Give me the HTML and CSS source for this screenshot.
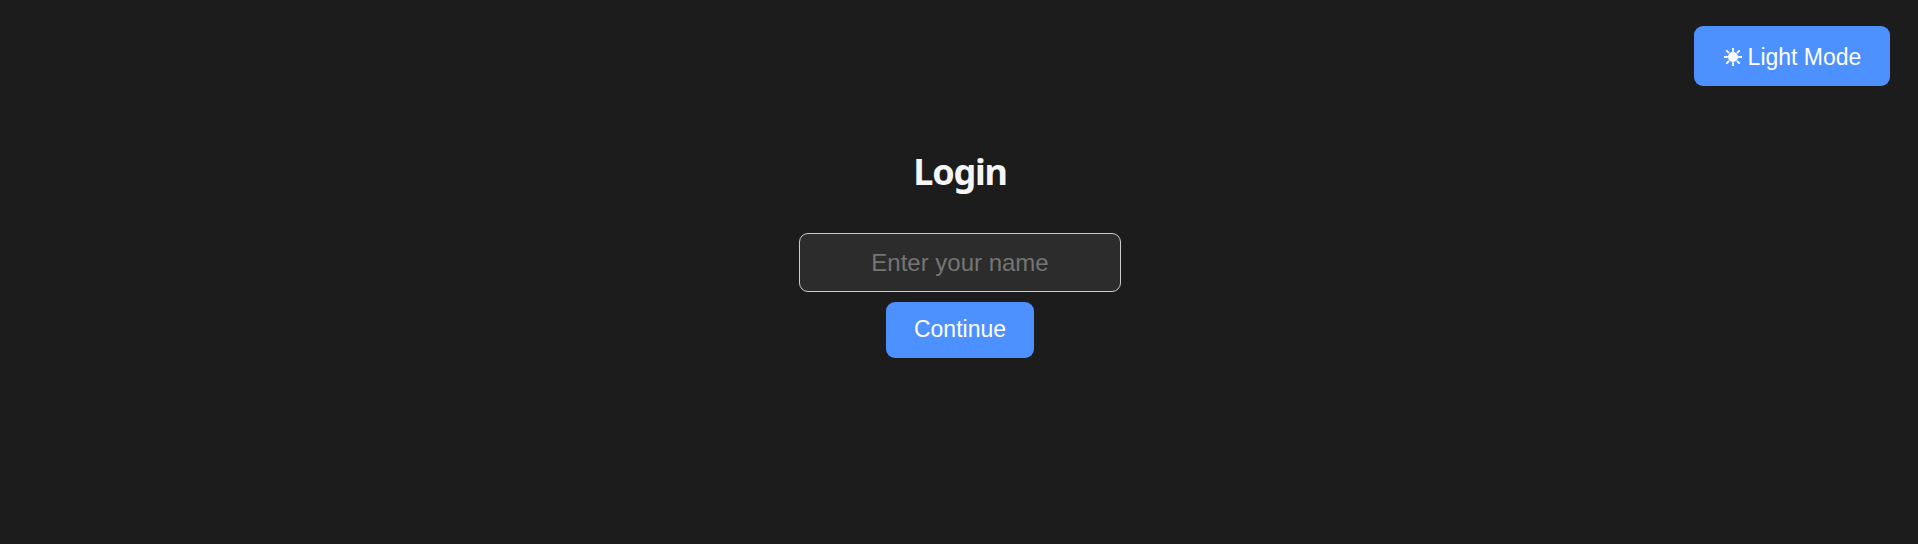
FILE: index.html
```html
<!DOCTYPE html>
<html lang="en">
<head>
<meta charset="utf-8">
<title>Login</title>
<link rel="stylesheet" href="styles.css">
</head>
<body>
<header class="topbar">
  <button class="btn theme-toggle" type="button">
    <svg class="sun" viewBox="0 0 18 18" aria-hidden="true">
      <circle cx="9" cy="9" r="5" fill="currentColor"/>
      <path d="M9 0v3.8M9 14.2v3.8M0 9h3.8M14.2 9h3.8M2.3 2.3l2.7 2.7M13 13l2.7 2.7M2.3 15.7l2.7-2.7M13 5l2.7-2.7" stroke="currentColor" stroke-width="1.9"/>
    </svg>
    <span>Light Mode</span>
  </button>
</header>
<main class="login">
  <h1 class="title">Login</h1>
  <input class="name-field" type="text" placeholder="Enter your name">
  <button class="btn continue" type="button">Continue</button>
</main>
</body>
</html>
```

FILE: styles.css
```css
* {
  box-sizing: border-box;
}

body {
  margin: 0;
  min-height: 544px;
  background: #1c1c1c;
  color: #f5f5f5;
  font-family: "Segoe UI", "Noto Sans", sans-serif;
}

.topbar {
  display: flex;
  justify-content: flex-end;
  padding: 26px 28px 0;
}

.btn {
  border: 0;
  border-radius: 9px;
  background: #4d90ff;
  color: #fff;
  font: 23px/28px "Liberation Sans", Arial, sans-serif;
  padding: 0;
}

.theme-toggle {
  display: flex;
  align-items: center;
  justify-content: center;
  gap: 6px;
  width: 196px;
  height: 60px;
  padding: 2px 0 0 1px;
}

.sun {
  width: 18px;
  height: 18px;
}

.login {
  display: flex;
  flex-direction: column;
  align-items: center;
  padding: 61px 0 0 2px;
}

.title {
  margin: 0;
  height: 86px;
  font-size: 36px;
  font-weight: 700;
  letter-spacing: -1.2px;
  line-height: 50px;
}

.name-field {
  width: 322px;
  height: 59px;
  border: 1px solid #ccc;
  border-radius: 9px;
  background: #2c2c2c;
  color: #f5f5f5;
  font: 24px "Liberation Sans", Arial, sans-serif;
  text-align: center;
}

.name-field::placeholder {
  color: #757575;
}

.continue {
  width: 148px;
  height: 56px;
  margin-top: 10px;
  padding-bottom: 2px;
}
```
